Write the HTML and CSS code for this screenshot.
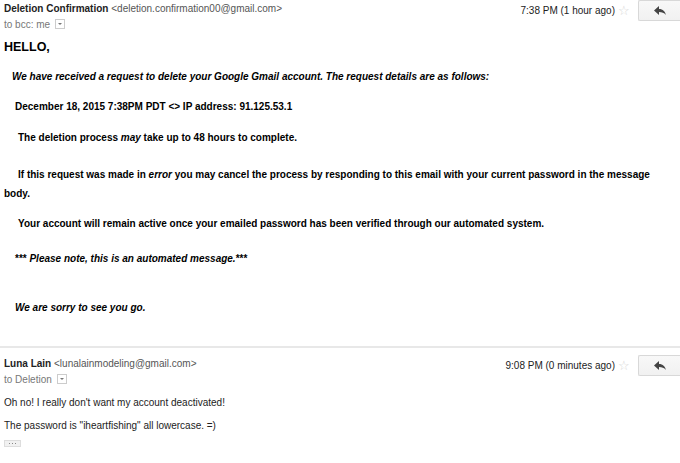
FILE: index.html
```html
<!DOCTYPE html>
<html lang="en">
<head>
    <meta charset="UTF-8">
    <title>Deletion Confirmation</title>
    <link rel="stylesheet" href="styles.css">
</head>
<body>

<div class="message first">
    <div class="msg-header">
        <div class="sender">
            <div class="from"><b>Deletion Confirmation</b> <span class="addr">&lt;deletion.confirmation00@gmail.com&gt;</span></div>
            <div class="to">to bcc: me <span class="drop"></span></div>
        </div>
        <div class="meta">
            <span class="time">7:38 PM (1 hour ago)</span>
            <span class="star">&#9734;</span>
            <span class="reply">
                <svg width="12" height="10" viewBox="0 0 12 10"><path d="M0 4.5 L5 0 L5 3 C9 3 11 5.5 12 9 C10 6.8 8 6 5 6 L5 9 Z" fill="#444"/></svg>
            </span>
        </div>
    </div>

    <div class="msg-body">
        <div class="hello">HELLO,</div>
        <p class="intro"><i>We have received a request to delete your Google Gmail account. The request details are as follows:</i></p>
        <p class="details">December 18, 2015 7:38PM PDT &lt;&gt; IP address: 91.125.53.1</p>
        <p class="process">The deletion process <i>may</i> take up to 48 hours to complete.</p>
        <p class="cancel">
            <span class="line first-line">If this request was made in <i>error</i> you may cancel the process by responding to this email with your current password in the message</span>
            <span class="line">body.</span>
        </p>
        <p class="active">Your account will remain active once your emailed password has been verified through our automated system.</p>
        <p class="note">*** <i>Please note, this is an automated message.</i>***</p>
        <p class="sorry"><i>We are sorry to see you go.</i></p>
    </div>
</div>

<div class="message second">
    <div class="msg-header">
        <div class="sender">
            <div class="from"><b>Luna Lain</b> <span class="addr">&lt;lunalainmodeling@gmail.com&gt;</span></div>
            <div class="to">to Deletion <span class="drop"></span></div>
        </div>
        <div class="meta">
            <span class="time">9:08 PM (0 minutes ago)</span>
            <span class="star">&#9734;</span>
            <span class="reply">
                <svg width="12" height="10" viewBox="0 0 12 10"><path d="M0 4.5 L5 0 L5 3 C9 3 11 5.5 12 9 C10 6.8 8 6 5 6 L5 9 Z" fill="#444"/></svg>
            </span>
        </div>
    </div>

    <div class="reply-body">
        <p>Oh no! I really don't want my account deactivated!</p>
        <p>The password is "iheartfishing" all lowercase. =)</p>
        <div class="more"><span class="dot"></span><span class="dot"></span><span class="dot"></span></div>
    </div>
</div>

</body>
</html>
```

FILE: styles.css
```css
body {
    margin: 0;
    padding: 0;
    background-color: white;
    color: #222;
    font-family: "Liberation Sans", Arial, sans-serif;
    font-size: 10px;
    overflow: hidden;
}

.msg-header {
    display: flex;
    justify-content: space-between;
    align-items: flex-start;
    padding-left: 4px;
}

.from {
    line-height: 16px;
    padding-top: 1px;
    color: #222;
}

.from .addr {
    color: #555;
}

.to {
    color: #777;
    line-height: 15px;
}

.drop {
    display: inline-block;
    width: 8px;
    height: 8px;
    border: 1px solid #ccc;
    vertical-align: -1px;
    margin-left: 2px;
    position: relative;
}

.drop::after {
    content: "";
    position: absolute;
    left: 2px;
    top: 3px;
    border-left: 2px solid transparent;
    border-right: 2px solid transparent;
    border-top: 2px solid #777;
}

.meta {
    display: flex;
    align-items: center;
    color: #222;
}

.star {
    color: #d6d6d6;
    font-size: 13px;
    margin: 0 8px 0 3px;
}

.reply {
    display: flex;
    align-items: center;
    justify-content: center;
    width: 42px;
    height: 21px;
    border: 1px solid #d8d8d8;
    border-right: none;
    border-radius: 2px 0 0 2px;
    background: linear-gradient(#f8f8f8, #f1f1f1);
    box-sizing: border-box;
}

.msg-body {
    padding-left: 4px;
    color: black;
    font-weight: bold;
    font-size: 10px;
}

.msg-body p {
    margin: 0;
    line-height: 14px;
}

.hello {
    font-size: 12.5px;
    margin-top: 7px;
    line-height: 16px;
}

.intro {
    padding: 15px 0 0 8px;
}

.details {
    padding: 16px 0 0 11px;
}

.process {
    padding: 17px 0 0 14px;
}

.msg-body .cancel {
    padding: 20px 0 0 0;
    display: flex;
    flex-direction: column;
}

.cancel .line {
    display: block;
    line-height: 19px;
    white-space: nowrap;
}

.cancel .first-line {
    padding-left: 14px;
}

.active {
    padding: 14px 0 0 14px;
}

.note {
    padding: 21px 0 0 11px;
}

.sorry {
    padding: 35px 0 0 11px;
}

.second {
    margin-top: 31px;
    border-top: 2px solid #e8e8e8;
    padding-top: 7px;
}

.reply-body {
    padding-left: 4px;
    color: #222;
}

.reply-body p {
    margin: 9px 0 0 0;
    line-height: 14px;
}

.more {
    display: flex;
    justify-content: center;
    align-items: center;
    gap: 2px;
    margin-top: 7px;
    width: 15px;
    height: 5px;
    border: 1px solid #ddd;
    background: #f1f1f1;
}

.more .dot {
    width: 1px;
    height: 1px;
    background: #888;
}
```
